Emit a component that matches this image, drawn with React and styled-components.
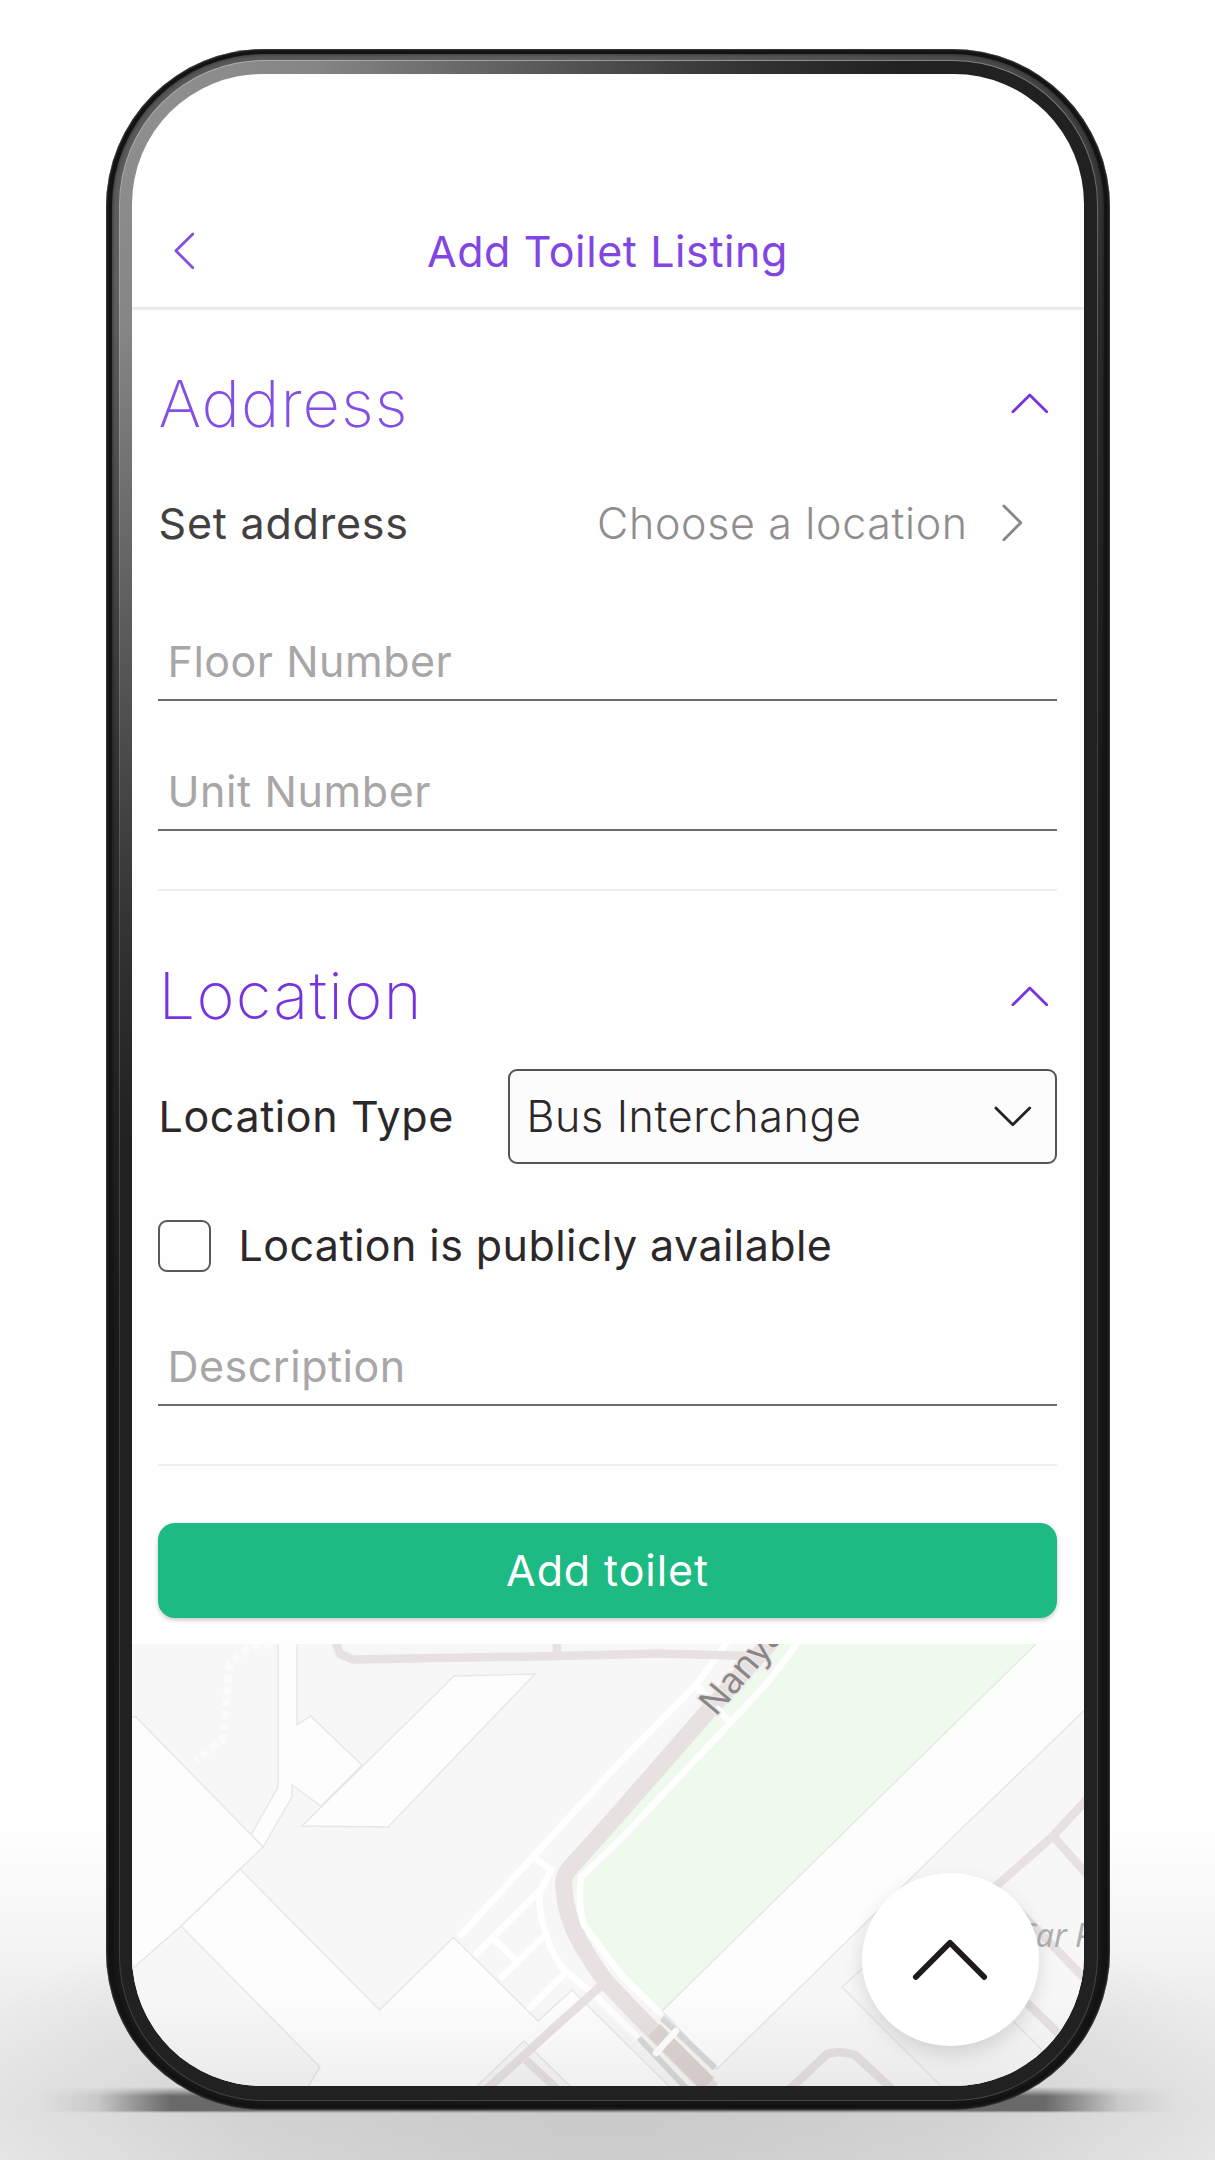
import React from "react";
import styled, { createGlobalStyle } from "styled-components";

const GlobalStyle = createGlobalStyle`
  * { box-sizing: border-box; }
  body { margin: 0; background: #fff; }
`;

const Stage = styled.main`
  position: relative;
  width: 1215px;
  height: 2160px;
  overflow: hidden;
  display: flex;
  justify-content: center;
  align-items: flex-start;
  padding-top: 49px;
  font-family: Inter, "Liberation Sans", sans-serif;
  background:
    radial-gradient(ellipse 720px 250px at 50% 2130px, rgba(0, 0, 0, 0.14), rgba(0, 0, 0, 0.1) 50%, rgba(0, 0, 0, 0) 100%),
    linear-gradient(to bottom, #fff 1820px, #f6f6f6 1920px, #ededed 2010px, #e9e9e9 2110px, #ededed 2160px);
`;

const GroundShadow = styled.div`
  position: absolute;
  left: 40px;
  right: 40px;
  top: 2087px;
  height: 26px;
  background: linear-gradient(to right, rgba(90, 90, 90, 0), rgba(90, 90, 90, 0.14) 5%, rgba(90, 90, 90, 0.88) 11.5%, rgba(90, 90, 90, 0.88) 88.5%, rgba(90, 90, 90, 0.14) 95%, rgba(90, 90, 90, 0));
  mask-image: linear-gradient(to bottom, transparent, #000 35%, #000 90%, transparent);
`;

const Phone = styled.div`
  position: relative;
  width: 1004px;
  height: 2061px;
  padding: 5px 6px 4px 6px;
  border-radius: 158px;
  background: #131313;
  box-shadow: inset 0 0 2px 0.5px #555;
`;

const Rim = styled.div`
  width: 100%;
  height: 100%;
  padding: 6px 6px 5px 7px;
  border-radius: 152px;
  background: linear-gradient(152deg, #555 0, #606060 9%, #2c2c2c 30%, #191919 50%, #171717 100%);
  box-shadow: inset 0 0 3px 1px rgba(0, 0, 0, 0.35);
`;

const Edge = styled.div`
  width: 100%;
  height: 100%;
  padding: 1px;
  border-radius: 145px;
  background: linear-gradient(152deg, #b0b0b0 0, #a0a0a0 9%, #555 32%, #3c3c3c 50%, #444 100%);
`;

const Bezel = styled.div`
  width: 100%;
  height: 100%;
  padding: 13px 13px 14px 12px;
  border-radius: 144px;
  background: radial-gradient(ellipse 780px 1080px at 0 0, #929292, #858585 25%, #5c5c5c 52%, #333 80%, #212121 100%);
`;

const Screen = styled.div`
  position: relative;
  width: 100%;
  height: 100%;
  overflow: hidden;
  display: flex;
  flex-direction: column;
  border-radius: 130px;
  background: #fefefe;
`;

const Header = styled.header`
  flex: none;
  height: 234px;
  padding: 120px 42px 0;
  display: grid;
  grid-template-columns: 40px 1fr 40px;
  align-items: center;
  border-bottom: 1px solid #e9e9e9;
  box-shadow: 0 1px 3px rgba(0, 0, 0, 0.14);
`;

const Title = styled.h1`
  margin: 0;
  text-align: center;
  font-size: 43px;
  line-height: 50px;
  font-weight: 400;
  letter-spacing: 0.6px;
  color: #8146e2;
`;

const Form = styled.section`
  flex: none;
  height: 1336px;
  padding: 36px 27px 0 26px;
  display: flex;
  flex-direction: column;
`;

const SectionHead = styled.div`
  flex: none;
  height: ${(p) => p.$height}px;
  margin-top: ${(p) => p.$top || 0}px;
  padding: 0 8px 0 1px;
  display: flex;
  align-items: center;
  justify-content: space-between;
`;

const SectionTitle = styled.h2`
  margin: 0;
  font-size: 65px;
  line-height: 80px;
  font-weight: 200;
  letter-spacing: ${(p) => p.$track}px;
  color: ${(p) => p.$color};
`;

const Row = styled.div`
  flex: none;
  height: ${(p) => p.$height}px;
  margin-top: ${(p) => p.$top || 0}px;
  padding-right: ${(p) => p.$right || 0}px;
  display: flex;
  align-items: center;
  justify-content: ${(p) => (p.$start ? "flex-start" : "space-between")};
  gap: ${(p) => p.$gap || 0}px;
`;

const Text = styled.span`
  padding: 0 0 ${(p) => p.$raise || 0}px ${(p) => p.$indent || 0}px;
  font-size: 43px;
  line-height: 52px;
  font-weight: ${(p) => p.$weight || 400};
  letter-spacing: ${(p) => (p.$track === undefined ? 0.65 : p.$track)}px;
  color: ${(p) => p.$color || "#2c2829"};
  white-space: nowrap;
`;

const Choice = styled.div`
  display: flex;
  align-items: center;
  gap: 34px;
`;

const Field = styled.div`
  flex: none;
  height: ${(p) => p.$height}px;
  padding: 0 9px 12px 10px;
  display: flex;
  align-items: flex-end;
  border-bottom: 2px solid #6c6a6b;
`;

const Divider = styled.hr`
  flex: none;
  width: 100%;
  height: 2px;
  margin: ${(p) => p.$top}px 0 0;
  border: 0;
  background: #eeeeee;
`;

const Select = styled.div`
  width: 549px;
  height: 95px;
  padding: 0 23px 0 17px;
  display: flex;
  align-items: center;
  justify-content: space-between;
  border: 2px solid #555354;
  border-radius: 9px;
  background: #fcfcfc;
`;

const Checkbox = styled.span`
  width: 53px;
  height: 52px;
  border: 2px solid #5a5859;
  border-radius: 9px;
`;

const Submit = styled.button`
  flex: none;
  height: 95px;
  margin: 57px 0 0;
  padding: 0 0 2px 1px;
  border: 0;
  border-radius: 17px;
  background: #1dba83;
  box-shadow: 0 2px 4px rgba(0, 0, 0, 0.22);
  font-family: inherit;
`;

const MapArea = styled.div`
  flex: 1;
  min-height: 0;
  background: #f7f7f7;
`;

const MapSvg = styled.svg`
  display: block;
  width: 952px;
  height: 442px;
`;

const BottomShade = styled.div`
  position: absolute;
  left: 0;
  right: 0;
  bottom: 0;
  height: 90px;
  background: linear-gradient(to bottom, rgba(0, 0, 0, 0), rgba(0, 0, 0, 0.05));
`;

const Fab = styled.div`
  position: absolute;
  right: 45px;
  bottom: 40px;
  width: 177px;
  height: 173px;
  display: flex;
  align-items: center;
  justify-content: center;
  border-radius: 50%;
  background: #fff;
  box-shadow: 0 8px 20px rgba(0, 0, 0, 0.13);
`;

const turns = {
  up: ["M2 20 L20 2 L38 20", 40, 22],
  down: ["M2 2 L20 20 L38 2", 40, 22],
  left: ["M20 2 L2 20 L20 38", 22, 40],
  right: ["M2 2 L20 20 L2 38", 22, 40],
};

function Chevron({ dir, color, width = 3, scale = 0.94 }) {
  const [d, w, h] = turns[dir];
  return (
    <svg width={w * scale} height={h * scale} viewBox={`0 0 ${w} ${h}`} fill="none" stroke={color} strokeWidth={width} strokeLinecap="round" strokeLinejoin="round">
      <path d={d} />
    </svg>
  );
}

const ROAD = "#e7e1e1";

function CampusMap() {
  return (
    <MapSvg viewBox="132 1644 952 442">
      {/* buildings */}
      <g fill="#fdfdfd" stroke="#e6e6e6" strokeWidth="1.4">
        <path d="M278 1640V1787L251 1835L263 1847L292 1797V1785L321 1806L362 1765L310.500 1716L297 1725V1640" />
        <path d="M454 1676L535 1674L388 1827L302 1826Z" />
        <path d="M240 1869L379.500 2010L453.500 1937.500L538 2021L572 1990L673 2090H306L320 2067L181 1926Z" />
        <path d="M128 1717H136L263 1847L240 1869L181 1926L130 1971Z" />
        <path d="M1036 1640H1090V1705L958 1832L717 2069L662 2011Z" />
        <path d="M477 2086L524 2041L570 2086" fill="#f7f7f7" />
        <path d="M863 1968L842 1987L941 2086H1041V2049L1013 2021" fill="none" />
      </g>
      {/* park */}
      <path fill="#eff9ed" d="M772 1644H1036L911.500 1766L662 2011L615 1977L586 1923L572 1887L575 1875L620 1808L703 1715Z" />
      <path fill="none" stroke="#e2e8e0" strokeWidth="1.200" d="M1036 1644L911.500 1766L662 2011" />
      {/* footpaths */}
      <g fill="none" stroke="#fff" strokeWidth="6.500" strokeLinejoin="round" strokeLinecap="round">
        <path stroke="#fbfbfb" strokeWidth="7.500" strokeDasharray="8 4" strokeLinecap="butt" d="M272 1644L251 1646L230 1663L226 1700L223 1740L195 1760" />
        <path d="M729 1640L696 1685L620 1762L461 1935M696 1685L711 1702" />
        <path d="M535 1858L551 1870L540 1892Q538 1912 547 1937Q553 1957 565 1971L591 1992L638 2038" />
        <path d="M540 1890L476 1954M495 1940L516 1961M545 1935L502 1977M565 1973L530 2008" />
      </g>
      {/* railway */}
      <g fill="none" stroke="#d9d9d9" strokeWidth="6">
        <path d="M662 2018L715 2068" />
        <path d="M639 2038L686 2088" />
      </g>
      {/* roads */}
      <g fill="none" stroke={ROAD} strokeWidth="8.500" strokeLinejoin="round">
        <path d="M335 1640L340 1654L353 1659.500L560 1656L658 1653.500L750 1656M557 1640V1656" />
        <path strokeWidth="17" d="M776 1636L703 1717L620 1812L570 1868Q562 1877 564 1889Q566 1916 579 1940Q590 1960 606 1982L650 2028L712 2090" />
        <path d="M602 1985L556 2026L486 2090M526 2060L558 2090" />
        <path d="M1090 1796L1052 1837L994 1888M1053 1836L1090 1878M1018 1910L1086 1980M1022 1998L1062 2037" />
        <path d="M789 2090L827 2054Q840 2050 855 2055L893 2090" />
      </g>
      <path stroke="#ddd3d2" strokeWidth="17" d="M654 2030L708 2084" />
      <g fill="none" stroke="#fff" strokeWidth="6.500" strokeLinejoin="round" strokeLinecap="round">
        <path d="M800 1640L768 1682L730 1723L620 1840L581 1877Q578 1906 584 1925L622 1976L660 2013M730 1723L718 1709" />
        <path d="M676 2031L656 2053" />
      </g>
      {/* street names */}
      <g fontFamily='"Noto Sans", "Open Sans", sans-serif'>
        <text transform="translate(715.500 1717.500) rotate(-49.500)" fontSize="36" fill="#888787" stroke="#eee6e6" strokeWidth="3" paintOrder="stroke">Nanya</text>
        <text x="1017" y="1947" fontSize="32" fontStyle="italic" fill="#b0aeae">Car P</text>
      </g>
    </MapSvg>
  );
}

export default function App() {
  return (
    <Stage>
      <GlobalStyle />
      <GroundShadow />
      <Phone>
        <Rim>
          <Edge>
            <Bezel>
              <Screen>
                <Header>
                  <Chevron dir="left" color="#8450e0" />
                  <Title>Add Toilet Listing</Title>
                </Header>
                <Form>
                  <SectionHead $height={119}>
                    <SectionTitle $color="#8450e4" $track={1}>Address</SectionTitle>
                    <Chevron dir="up" color="#7634dc" />
                  </SectionHead>
                  <Row $height={119} $right={34}>
                    <Text $color="#434041" $track={0.8} $indent={1}>Set address</Text>
                    <Choice>
                      <Text $weight={300} $color="#918d8e">Choose a location</Text>
                      <Chevron dir="right" color="#8a8687" />
                    </Choice>
                  </Row>
                  <Field $height={119}>
                    <Text $track={0.5} $color="#a9a6a7">Floor Number</Text>
                  </Field>
                  <Field $height={130}>
                    <Text $track={0.6} $color="#a9a6a7">Unit Number</Text>
                  </Field>
                  <Divider $top={58} />
                  <SectionHead $height={120} $top={45}>
                    <SectionTitle $color="#7634dc" $track={1.3}>Location</SectionTitle>
                    <Chevron dir="up" color="#7634dc" />
                  </SectionHead>
                  <Row $height={95} $top={13}>
                    <Text $indent={1} $raise={2} $track={0.6}>Location Type</Text>
                    <Select>
                      <Text $weight={300} $raise={2}>Bus Interchange</Text>
                      <Chevron dir="down" color="#262223" />
                    </Select>
                  </Row>
                  <Row $height={52} $top={56} $gap={28} $start>
                    <Checkbox />
                    <Text $track={0.43} $raise={2}>Location is publicly available</Text>
                  </Row>
                  <Field $height={134}>
                    <Text $track={0.5} $color="#a9a6a7">Description</Text>
                  </Field>
                  <Divider $top={58} />
                  <Submit>
                    <Text $color="#fff" $track={0.9}>Add toilet</Text>
                  </Submit>
                </Form>
                <MapArea>
                  <CampusMap />
                </MapArea>
                <BottomShade />
                <Fab>
                  <Chevron dir="up" color="#211a1c" width={3} scale={1.9} />
                </Fab>
              </Screen>
            </Bezel>
          </Edge>
        </Rim>
      </Phone>
    </Stage>
  );
}
